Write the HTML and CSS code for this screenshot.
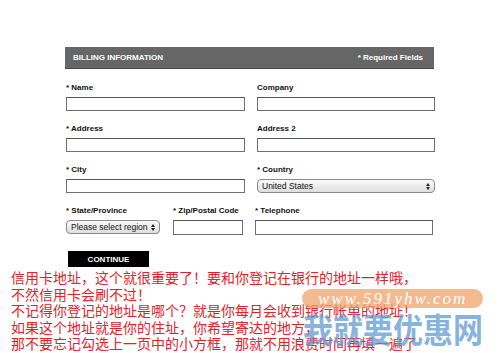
FILE: index.html
```html
<!DOCTYPE html>
<html lang="zh-CN">
<head>
  <meta charset="UTF-8" />
  <meta name="viewport" content="width=device-width, initial-scale=1.0"/>
  <title>Billing Information</title>
  <link rel="stylesheet" href="styles.css">
</head>
<body>
  <div class="billing">
    <div class="billing-head">
      <span>BILLING INFORMATION</span>
      <span>* Required Fields</span>
    </div>

    <div class="grid">
      <div class="field">
        <label>* Name</label>
        <input type="text">
      </div>
      <div class="field">
        <label>Company</label>
        <input type="text">
      </div>
      <div class="field">
        <label>* Address</label>
        <input type="text">
      </div>
      <div class="field">
        <label>Address 2</label>
        <input type="text">
      </div>
      <div class="field">
        <label>* City</label>
        <input type="text">
      </div>
      <div class="field">
        <label>* Country</label>
        <div class="select wide">United States<span class="arrows"></span></div>
      </div>
    </div>

    <div class="row3">
      <div class="field state">
        <label>* State/Province</label>
        <div class="select">Please select region<span class="arrows"></span></div>
      </div>
      <div class="field zip">
        <label>* Zip/Postal Code</label>
        <input type="text">
      </div>
      <div class="field tel">
        <label>* Telephone</label>
        <input type="text">
      </div>
    </div>

    <button class="continue">CONTINUE</button>
  </div>

  <div class="note">
    <p>信用卡地址，这个就很重要了！要和你登记在银行的地址一样哦，</p>
    <p>不然信用卡会刷不过！</p>
    <p>不记得你登记的地址是哪个？就是你每月会收到银行帐单的地址！</p>
    <p>如果这个地址就是你的住址，你希望寄达的地方，</p>
    <p>那不要忘记勾选上一页中的小方框，那就不用浪费时间再填一遍了</p>
  </div>

  <!-- watermark over the note -->
  <div class="mark-url">www.591yhw.com</div>
  <div class="mark-name">我就要优惠网</div>
</body>
</html>
```

FILE: styles.css
```css
body {
  margin: 0;
  background: #fff;
  font-family: "Liberation Sans", Arial, sans-serif;
  position: relative;
  height: 353px;
  overflow: hidden;
}

.billing {
  margin-left: 65px;
  width: 369px;
  padding-top: 40px;
}

.billing-head {
  margin-top: 7px;
  height: 22px;
  background: #666;
  border-bottom: 1px solid #4a4a4a;
  box-sizing: border-box;
  display: flex;
  justify-content: space-between;
  align-items: center;
  padding: 0 11px 0 8px;
  color: #fff;
  font-weight: bold;
  font-size: 8px;
}

.grid {
  display: grid;
  grid-template-columns: 179px 178px;
  column-gap: 12px;
  row-gap: 13px;
  margin-top: 14px;
  padding-left: 1px;
}

.field label {
  display: block;
  height: 10px;
  line-height: 10px;
  font-size: 8px;
  font-weight: bold;
  color: #111;
  margin-bottom: 4px;
}

.field input {
  display: block;
  width: 100%;
  height: 14px;
  box-sizing: border-box;
  margin: 0;
  border: 1px solid #6f6f6f;
  border-top-color: #555;
  background: #fff;
  padding: 0;
}

.select {
  position: relative;
  height: 14px;
  box-sizing: border-box;
  border: 1px solid #8a8a8a;
  border-radius: 4px;
  background: linear-gradient(#fafafa, #dedede);
  font-size: 8.5px;
  line-height: 12px;
  padding-left: 4px;
  color: #111;
}

.arrows {
  position: absolute;
  right: 4px;
  top: 3px;
  width: 0;
  height: 0;
  border-left: 2px solid transparent;
  border-right: 2px solid transparent;
  border-bottom: 3px solid #222;
}

.arrows::after {
  content: "";
  position: absolute;
  left: -2px;
  top: 4px;
  border-left: 2px solid transparent;
  border-right: 2px solid transparent;
  border-top: 3px solid #222;
}

.row3 {
  display: flex;
  margin-top: 13px;
  padding-left: 1px;
}

.state { width: 94px; }
.zip { width: 70px; margin-left: 13px; }
.tel { width: 178px; margin-left: 12px; }

.row3 input { height: 15px; }

.continue {
  display: block;
  margin: 16px 0 0 3px;
  width: 81px;
  height: 16px;
  border: none;
  background: #000;
  color: #fff;
  font-family: "Liberation Sans", Arial, sans-serif;
  font-weight: bold;
  font-size: 8px;
  padding: 0;
}

.note {
  margin-top: 2px;
  padding-left: 11px;
  color: #e3212b;
  font-family: "Noto Sans CJK SC", sans-serif;
  font-size: 14px;
  line-height: 16.6px;
}

.note p {
  margin: 0;
  white-space: nowrap;
}

.mark-url {
  position: absolute;
  left: 302px;
  top: 289px;
  width: 181px;
  height: 19px;
  border-radius: 10px;
  background: rgba(240, 160, 100, 0.72);
  color: #fff;
  font-family: "Liberation Serif", serif;
  font-style: italic;
  font-size: 17px;
  line-height: 19px;
  letter-spacing: 2px;
  padding-left: 16px;
  box-sizing: border-box;
}

.mark-name {
  position: absolute;
  left: 303px;
  top: 308px;
  color: rgba(95, 155, 210, 0.75);
  font-family: "Noto Sans CJK SC", sans-serif;
  font-weight: bold;
  font-size: 30px;
  line-height: 40px;
  transform: scaleY(1.15);
}
```
